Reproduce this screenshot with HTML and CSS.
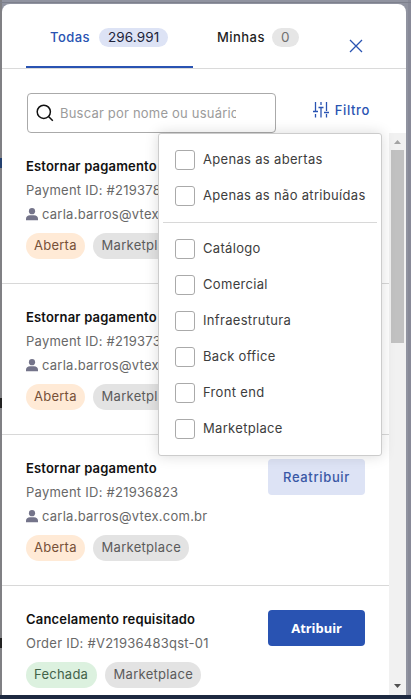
FILE: index.html
```html
<!DOCTYPE html>
<html lang="pt-BR">
<head>
<meta charset="utf-8">
<title>Solicitações</title>
<link rel="stylesheet" href="styles.css">
</head>
<body>
<svg class="sprite" width="0" height="0">
  <symbol id="user" viewBox="0 0 12 13"><circle cx="6" cy="3.2" r="3.1"/><path d="M0 12.2V10.8C0 8.500 1.700 7.300 4 7.300H8C10.300 7.300 12 8.500 12 10.800V12.200Z"/></symbol>
</svg>
<main class="modal">
  <header class="header">
    <nav class="tabs">
      <a class="tab active"><span class="tab-name todas">Todas</span><span class="count">296.991</span></a>
      <a class="tab"><span class="tab-name minhas">Minhas</span><span class="count muted">0</span></a>
    </nav>
    <button class="close" aria-label="Fechar"><svg width="14" height="14" viewBox="0 0 14 14"><path d="M1 1l12 12M13 1L1 13"/></svg></button>
  </header>
  <div class="body">
    <div class="toolbar">
      <div class="search">
        <svg width="18" height="18" viewBox="0 0 18 18"><circle cx="7.800" cy="7.800" r="6.600"/><path d="M12.500 12.500l4.300 4.300"/></svg>
        <span class="placeholder">Buscar por nome ou usuário</span>
      </div>
      <button class="filter"><svg width="16" height="16" viewBox="0 0 16 16"><path d="M2.500 0v9M2.500 12v3.500M0 9.500h5M8 0v3M8 6v9.500M5.500 5.500h5M13.500 0v9M13.500 12v3.500M11 10.500h5"/></svg><span>Filtro</span></button>
      <div class="menu">
        <label class="option"><i class="box"></i><span>Apenas as abertas</span></label>
        <label class="option"><i class="box"></i><span>Apenas as não atribuídas</span></label>
        <hr class="divider">
        <label class="option"><i class="box"></i><span>Catálogo</span></label>
        <label class="option"><i class="box"></i><span>Comercial</span></label>
        <label class="option"><i class="box"></i><span>Infraestrutura</span></label>
        <label class="option"><i class="box"></i><span>Back office</span></label>
        <label class="option"><i class="box"></i><span>Front end</span></label>
        <label class="option"><i class="box"></i><span>Marketplace</span></label>
      </div>
    </div>
    <div class="content">
      <section class="list">
        <article class="card">
          <div class="info">
            <h2 class="title">Estornar pagamento</h2>
            <p class="line">Payment ID: #21937823</p>
            <p class="line mail"><svg class="user" width="12" height="13"><use href="#user"/></svg><span>carla.barros@vtex.com.br</span></p>
            <div class="tags"><span class="tag open">Aberta</span><span class="tag market">Marketplace</span></div>
          </div>
        </article>
        <article class="card">
          <div class="info">
            <h2 class="title">Estornar pagamento</h2>
            <p class="line">Payment ID: #21937323</p>
            <p class="line mail"><svg class="user" width="12" height="13"><use href="#user"/></svg><span>carla.barros@vtex.com.br</span></p>
            <div class="tags"><span class="tag open">Aberta</span><span class="tag market">Marketplace</span></div>
          </div>
        </article>
        <article class="card">
          <div class="info">
            <h2 class="title">Estornar pagamento</h2>
            <p class="line">Payment ID: #21936823</p>
            <p class="line mail"><svg class="user" width="12" height="13"><use href="#user"/></svg><span>carla.barros@vtex.com.br</span></p>
            <div class="tags"><span class="tag open">Aberta</span><span class="tag market">Marketplace</span></div>
          </div>
          <button class="action soft">Reatribuir</button>
        </article>
        <article class="card">
          <div class="info">
            <h2 class="title">Cancelamento requisitado</h2>
            <p class="line">Order ID: #V21936483qst-01</p>
            <div class="tags"><span class="tag closed">Fechada</span><span class="tag market">Marketplace</span></div>
          </div>
          <button class="action solid">Atribuir</button>
        </article>
      </section>
      <div class="scrollbar">
        <svg class="arrow up" width="7" height="4" viewBox="0 0 7 4"><path d="M0 4L3.500 0 7 4z"/></svg>
        <div class="thumb"></div>
        <svg class="arrow down" width="7" height="4" viewBox="0 0 7 4"><path d="M0 0l3.500 4L7 0z"/></svg>
      </div>
    </div>
  </div>
</main>
</body>
</html>
```

FILE: styles.css
```css
* { box-sizing: border-box; }
body {
  margin: 0;
  width: 411px;
  height: 699px;
  padding: 4px 5px 4px 2px;
  overflow: hidden;
  background:
    linear-gradient(#1d2940, #1d2940) 0 695px / 100% 4px no-repeat,
    linear-gradient(#7d808c, #7d808c) 0 2px / 100% 1px no-repeat,
    linear-gradient(#24416f, #24416f) 0 158px / 2px 10px no-repeat,
    linear-gradient(#222, #222) 0 398px / 2px 10px no-repeat,
    linear-gradient(#222, #222) 0 638px / 2px 10px no-repeat,
    linear-gradient(90deg, #808084 0 2px, #9093a0 2px 408px, #888a98 408px);
  font-family: Inter, "Liberation Sans", sans-serif;
  font-size: 13px;
  color: #3d3d3d;
}
.sprite { position: absolute; }
button { border: 0; padding: 0; background: none; font: inherit; }
.modal {
  display: flex;
  flex-direction: column;
  height: 691px;
  background: #fff;
  border-radius: 8px 8px 0 0;
  overflow: hidden;
}
.header {
  flex: none;
  display: flex;
  height: 65px;
  padding: 0 43px 0 24px;
  border-bottom: 1px solid #dadada;
}
.tabs { display: flex; flex: 1; }
.tab {
  display: flex;
  align-items: center;
  gap: 8px;
  height: 64px;
  padding: 4px 24px 0;
  border-bottom: 2px solid transparent;
  color: #1f1f1f;
}
.tab.active { width: 167px; border-color: #2953b2; color: #2953b2; }
.tab-name { font-weight: 500; letter-spacing: .45px; white-space: nowrap; }
.todas { width: 41px; }
.minhas { width: 47px; }
.count {
  height: 19px;
  line-height: 19px;
  padding: 0 9px;
  border-radius: 10px;
  background: #dde3f5;
  color: #20243a;
  font-size: 13.500px;
  letter-spacing: .1px;
}
.muted { background: #e6e6e6; color: #707070; }
.close { height: 14px; margin-top: 35px; }
.close svg { display: block; fill: none; stroke: #2953b2; stroke-width: 1.300; }
.body { flex: 1; display: flex; flex-direction: column; }
.toolbar {
  position: relative;
  flex: none;
  display: flex;
  justify-content: space-between;
  height: 64px;
  padding: 24px 36px 0 25px;
}
.search {
  display: flex;
  align-items: center;
  gap: 6px;
  width: 249px;
  height: 40px;
  padding: 0 39px 0 8px;
  border: 1px solid #aaa;
  border-radius: 4px;
}
.search svg { flex: none; fill: none; stroke: #111; stroke-width: 1.500; }
.placeholder { overflow: hidden; white-space: nowrap; color: #9b9b9b; letter-spacing: .2px; }
.filter { display: flex; align-items: center; gap: 6px; height: 34px; color: #2953b2; font-weight: 500; letter-spacing: .65px; }
.filter svg { fill: none; stroke: #2953b2; stroke-width: 1.300; }
.menu {
  position: absolute;
  z-index: 2;
  top: 64px;
  left: 156px;
  width: 224px;
  height: 323px;
  padding: 8px 4px;
  background: #fff;
  border: 1px solid #ccc;
  border-radius: 3px;
  box-shadow: 0 0 14px rgba(0, 0, 0, .15);
}
.option { display: flex; align-items: center; gap: 8px; height: 36px; padding-left: 12px; letter-spacing: .32px; white-space: nowrap; }
.option span { padding-bottom: 2px; }
.box { width: 20px; height: 20px; border: 1px solid #aaa; border-radius: 3px; }
.divider { height: 1px; margin: 8px 0; border: 0; background: #d8d8d8; }
.content { flex: 1; display: flex; }
.list { flex: 1; }
.card {
  display: flex;
  justify-content: space-between;
  height: 151px;
  padding: 21px 24px 0;
  border-bottom: 1px solid #d8d8d8;
}
.card:last-child { height: 109px; border: 0; }
.title { margin: 0; font-size: 13px; font-weight: 600; line-height: 24px; letter-spacing: .18px; color: #111; white-space: nowrap; }
.line { margin: 0; height: 24px; line-height: 24px; letter-spacing: .25px; color: #686868; white-space: nowrap; }
.mail { display: flex; align-items: center; gap: 4px; }
.user { fill: #74748a; margin-top: 1px; }
.tags { display: flex; gap: 8px; margin-top: 7px; }
.tag { height: 26px; line-height: 25px; padding: 0 8px; border-radius: 13px; letter-spacing: .25px; }
.open { background: #ffead6; color: #765038; width: 59px; }
.market { background: #e3e3e3; color: #5b5b5b; width: 96px; padding: 0 8.500px; letter-spacing: .3px; }
.closed { background: #dcf1df; color: #43634a; width: 71px; }
.action { width: 97px; height: 36px; margin-top: 3px; padding-bottom: 1px; border-radius: 4px; letter-spacing: .65px; }
.soft { background: #dde3f5; color: #3958a5; font-weight: 500; }
.solid { background: #2953b2; color: #fff; font: 700 13px "Noto Sans", sans-serif; letter-spacing: 0; }
.scrollbar { display: flex; flex-direction: column; align-items: center; width: 17px; height: 562px; padding: 7px 2px 7px; background: #f1f1f1; }
.arrow { display: block; flex: none; }
.up { fill: #a3a3a3; }
.down { margin-top: auto; fill: #505050; }
.thumb { width: 13px; height: 193px; margin-top: 6px; background: #c1c1c1; }
```
